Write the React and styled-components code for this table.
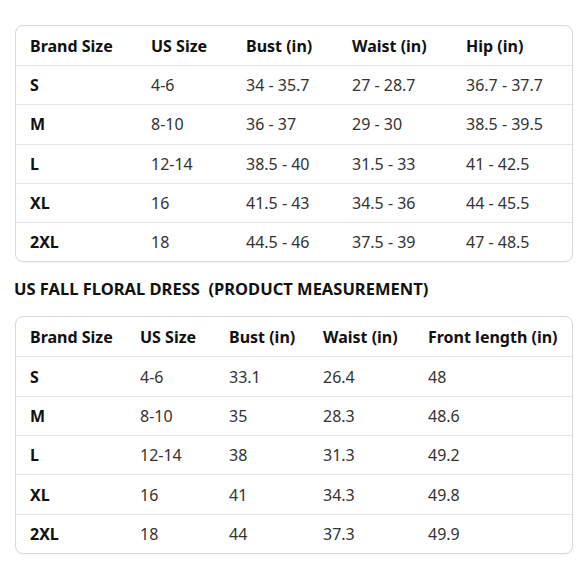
import styled, { createGlobalStyle } from 'styled-components';

const GlobalStyle = createGlobalStyle`
  html, body {
    margin: 0;
    padding: 0;
    background: #ffffff;
  }
  body {
    font-family: "Noto Sans", "Open Sans", sans-serif;
    color: #333333;
  }
`;

const Page = styled.div`
  width: 580px;
  height: 580px;
  padding: 25px 7px 0 15px;
  box-sizing: border-box;
  display: flex;
  flex-direction: column;
`;

const Card = styled.div`
  border: 1px solid #d5d9d9;
  border-radius: 8px;
  overflow: hidden;
  box-shadow: 0 1px 2px rgba(0, 0, 0, 0.04);
`;

const Row = styled.div`
  display: grid;
  grid-template-columns: ${({ $cols }) => $cols};
  box-sizing: border-box;
  height: ${({ $first }) => ($first ? '39px' : '39.3px')};
  align-items: center;
  border-top: ${({ $first }) => ($first ? 'none' : '1px solid #e3e6e6')};
`;

const Cell = styled.div`
  padding-left: 14px;
  font-size: 16px;
  white-space: nowrap;
  font-weight: ${({ $bold }) => ($bold ? 700 : 400)};
  color: ${({ $bold }) => ($bold ? '#111111' : '#333333')};
`;

const Title = styled.h2`
  margin: 16px 0 16px -1px;
  font-size: 16.5px;
  line-height: 22px;
  font-weight: 700;
  color: #111111;
  white-space: pre;
`;

const SizeTable = ({ cols, head, rows }) => (
  <Card>
    <Row $cols={cols} $first>
      {head.map((h) => (
        <Cell key={h} $bold>{h}</Cell>
      ))}
    </Row>
    {rows.map((r) => (
      <Row key={r[0]} $cols={cols}>
        {r.map((v, i) => (
          <Cell key={i} $bold={i === 0}>{v}</Cell>
        ))}
      </Row>
    ))}
  </Card>
);

const bodyRows = [
  ['S', '4-6', '34 - 35.7', '27 - 28.7', '36.7 - 37.7'],
  ['M', '8-10', '36 - 37', '29 - 30', '38.5 - 39.5'],
  ['L', '12-14', '38.5 - 40', '31.5 - 33', '41 - 42.5'],
  ['XL', '16', '41.5 - 43', '34.5 - 36', '44 - 45.5'],
  ['2XL', '18', '44.5 - 46', '37.5 - 39', '47 - 48.5'],
];

const productRows = [
  ['S', '4-6', '33.1', '26.4', '48'],
  ['M', '8-10', '35', '28.3', '48.6'],
  ['L', '12-14', '38', '31.3', '49.2'],
  ['XL', '16', '41', '34.3', '49.8'],
  ['2XL', '18', '44', '37.3', '49.9'],
];

const App = () => (
  <>
    <GlobalStyle />
    <Page>
      <SizeTable
        cols="121px 95px 106px 114px 1fr"
        head={['Brand Size', 'US Size', 'Bust (in)', 'Waist (in)', 'Hip (in)']}
        rows={bodyRows}
      />
      <Title>{'US FALL FLORAL DRESS  (PRODUCT MEASUREMENT)'}</Title>
      <SizeTable
        cols="110px 89px 94px 105px 1fr"
        head={['Brand Size', 'US Size', 'Bust (in)', 'Waist (in)', 'Front length (in)']}
        rows={productRows}
      />
    </Page>
  </>
);

export default App;
